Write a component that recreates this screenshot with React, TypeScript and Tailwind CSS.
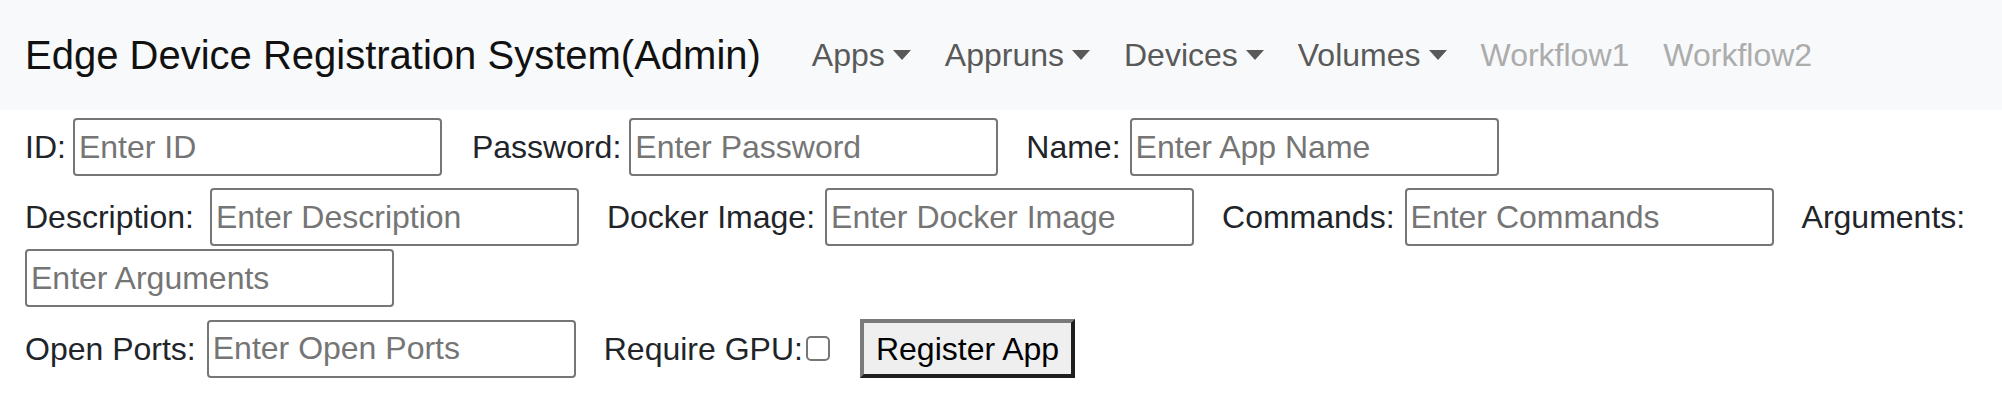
import React from 'react';

type Field = { label: string; placeholder: string; lm?: string; im?: string };

const rows: Field[][] = [
  [
    { label: 'ID:', placeholder: 'Enter ID', lm: 'mr-[7px]', im: 'mr-[30px]' },
    { label: 'Password:', placeholder: 'Enter Password', lm: 'mr-[8px]' },
    { label: 'Name:', placeholder: 'Enter App Name', lm: 'mr-[9px]' },
  ],
  [
    { label: 'Description:', placeholder: 'Enter Description', lm: 'mr-[16px]' },
    { label: 'Docker Image:', placeholder: 'Enter Docker Image' },
    { label: 'Commands:', placeholder: 'Enter Commands' },
    { label: 'Arguments:', placeholder: 'Enter Arguments' },
  ],
];

const navItems = [
  { name: 'Apps', dropdown: true },
  { name: 'Appruns', dropdown: true },
  { name: 'Devices', dropdown: true },
  { name: 'Volumes', dropdown: true },
  { name: 'Workflow1', dropdown: false },
  { name: 'Workflow2', dropdown: false },
];

const inputClass =
  'w-[369px] h-[58px] px-[4px] border-2 border-[#767676] rounded-[4px] bg-white text-[32px] text-[#212529] outline-none placeholder:text-[#757575]';

const FieldItem: React.FC<Field> = ({ label, placeholder, lm, im }) => (
  <>
    <label className={`${lm ?? 'mr-[10px]'} leading-[48px]`}>{label}</label>
    <input type="text" placeholder={placeholder} className={`${inputClass} ${im ?? 'mr-[28px]'}`} />
  </>
);

export default function App() {
  return (
    <div className="min-h-screen bg-white text-[#212529] font-['Liberation_Sans',Arial,sans-serif]">
      <nav className="h-[110px] bg-[#f8f9fa] flex items-center pl-[25px]">
        <span className="text-[40px] text-[#111] mr-[34px] whitespace-nowrap">
          Edge Device Registration System(Admin)
        </span>
        <ul className="flex items-center text-[32px]">
          {navItems.map((item) => (
            <li key={item.name}>
              <a
                href="#"
                className={`flex items-center px-[17px] whitespace-nowrap ${
                  item.dropdown ? 'text-[#595959]' : 'text-[#acacac]'
                }`}
              >
                {item.name}
                {item.dropdown && (
                  <span className="ml-[8px] w-0 h-0 border-l-[9.5px] border-r-[9.5px] border-t-[10px] border-l-transparent border-r-transparent border-t-[#595959]" />
                )}
              </a>
            </li>
          ))}
        </ul>
      </nav>

      <form className="pl-[25px] pt-[8px] flex flex-col gap-[12px] text-[32px]">
        {rows.map((row, i) => (
          <div key={i} className="flex flex-wrap items-center gap-y-[3px]">
            {row.map((f) => (
              <FieldItem key={f.label} {...f} />
            ))}
          </div>
        ))}
        <div className="flex flex-wrap items-center">
          <FieldItem label="Open Ports:" placeholder="Enter Open Ports" lm="mr-[11px]" />
          <label className="leading-[48px]">Require GPU:</label>
          <input
            type="checkbox"
            className="ml-[3px] mr-[30px] w-[24px] h-[25px] appearance-none border-2 border-[#767676] rounded-[5px] bg-white"
          />
          <button
            type="button"
            className="h-[59px] px-[12px] bg-[#efefef] text-black text-[32px] border-[4px] border-t-[#7a7a7a] border-l-[#7a7a7a] border-b-[#1f1f1f] border-r-[#1f1f1f]"
          >
            Register App
          </button>
        </div>
      </form>
    </div>
  );
}
